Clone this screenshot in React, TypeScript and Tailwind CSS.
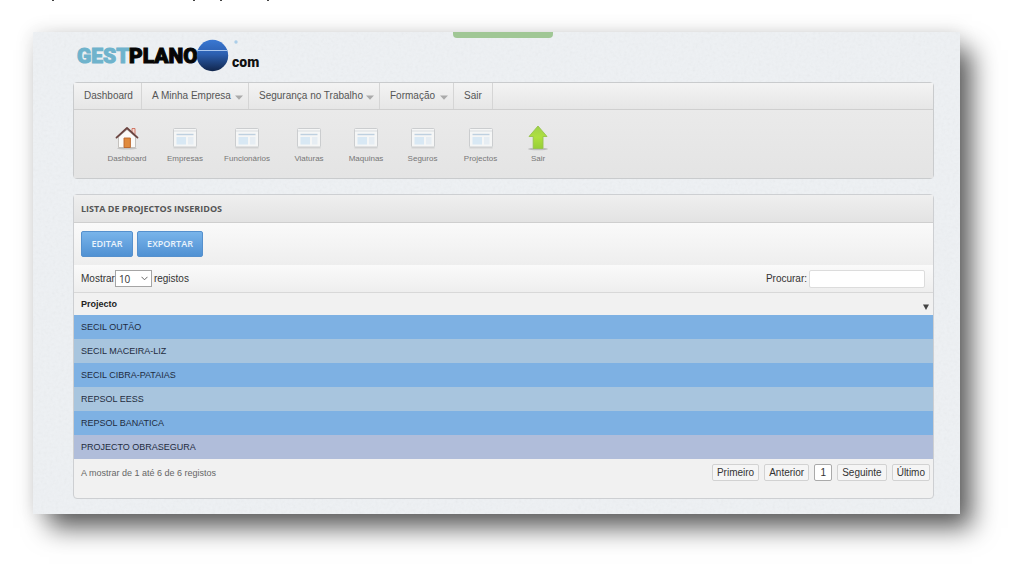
import React from "react";

const arial = "font-['Liberation_Sans',Arial,sans-serif]";

type MenuItem = { label: string; width: string; arrow?: boolean };

const menu: MenuItem[] = [
  { label: "Dashboard", width: "w-[68px]" },
  { label: "A Minha Empresa", width: "w-[107px]", arrow: true },
  { label: "Segurança no Trabalho", width: "w-[131px]", arrow: true },
  { label: "Formação", width: "w-[74px]", arrow: true },
  { label: "Sair", width: "w-[39px]" },
];

type Shortcut = { label: string; width: string; icon: () => React.ReactElement };

function HouseIcon() {
  return (
    <svg width="26" height="24" viewBox="0 0 26 24" aria-hidden="true">
      <ellipse cx="13" cy="22.3" rx="10" ry="1.2" fill="#000" opacity="0.15" />
      <path d="M18 2.5h3v6h-3z" fill="#f3d9d2" stroke="#c9614c" strokeWidth="0.8" />
      <path d="M4.500 11 13 3.600 21.500 11v10.500H4.500z" fill="#fbfaf8" stroke="#b9b5b0" strokeWidth="0.8" />
      <path d="M10 12h6.400v9.500H10z" fill="#e08a3c" stroke="#b9642a" strokeWidth="0.9" />
      <path d="M2.500 11.600 13 2l10.500 9.600" fill="none" stroke="#6b4440" strokeWidth="1.8" strokeLinejoin="round" strokeLinecap="round" />
    </svg>
  );
}

function WindowIcon() {
  return (
    <svg width="24" height="22" viewBox="0 0 24 22" aria-hidden="true">
      <rect x="0.5" y="20" width="23" height="1.5" fill="#000" opacity="0.08" />
      <rect x="0.5" y="1.5" width="23" height="18.5" rx="1" fill="#f5f6f6" stroke="#cbcdcf" />
      <path d="M1 4h22" stroke="#d9dde0" />
      <path d="M3.5 7.5h17" stroke="#bed0e0" strokeWidth="1.4" />
      <rect x="3.5" y="10" width="9.5" height="7.500" fill="#d8e8f4" />
      <rect x="15" y="10" width="5.5" height="7.500" fill="#e6edf3" />
    </svg>
  );
}

function UpIcon() {
  return (
    <svg width="24" height="26" viewBox="0 0 24 26" aria-hidden="true">
      <defs>
        <linearGradient id="up" x1="0" y1="0" x2="0" y2="1">
          <stop offset="0" stopColor="#9fd14a" />
          <stop offset="0.5" stopColor="#aee03f" />
          <stop offset="1" stopColor="#97cf38" />
        </linearGradient>
      </defs>
      <ellipse cx="12" cy="24" rx="10" ry="1.3" fill="#000" opacity="0.18" />
      <path d="M12 1 21 11.5h-4V23.500H7.200V11.500H3z" fill="url(#up)" stroke="#96c34c" strokeWidth="0.9" strokeLinejoin="round" />
    </svg>
  );
}

const shortcuts: Shortcut[] = [
  { label: "Dashboard", width: "w-[60px]", icon: HouseIcon },
  { label: "Empresas", width: "w-[56px]", icon: WindowIcon },
  { label: "Funcionários", width: "w-[68px]", icon: WindowIcon },
  { label: "Viaturas", width: "w-[56px]", icon: WindowIcon },
  { label: "Maquinas", width: "w-[58px]", icon: WindowIcon },
  { label: "Seguros", width: "w-[55px]", icon: WindowIcon },
  { label: "Projectos", width: "w-[61px]", icon: WindowIcon },
  { label: "Sair", width: "w-[54px]", icon: UpIcon },
];

const rows = [
  { name: "SECIL OUTÃO", bg: "bg-[#7eb1e3]" },
  { name: "SECIL MACEIRA-LIZ", bg: "bg-[#a8c5de]" },
  { name: "SECIL CIBRA-PATAIAS", bg: "bg-[#7eb1e3]" },
  { name: "REPSOL EESS", bg: "bg-[#a8c5de]" },
  { name: "REPSOL BANATICA", bg: "bg-[#7eb1e3]" },
  { name: "PROJECTO OBRASEGURA", bg: "bg-[#b0bdda]" },
];

const pages = ["Primeiro", "Anterior", "1", "Seguinte", "Último"];

function Texture() {
  return (
    <svg className="pointer-events-none absolute inset-0 h-full w-full opacity-8" aria-hidden="true">
      <filter id="grain">
        <feTurbulence type="fractalNoise" baseFrequency="0.35" numOctaves="2" seed="4" />
        <feColorMatrix type="saturate" values="0" />
      </filter>
      <rect width="100%" height="100%" filter="url(#grain)" />
    </svg>
  );
}

function Logo() {
  return (
    <a href="#" className="flex h-[36px] w-fit items-center pl-1 font-['Roboto',sans-serif] font-black whitespace-nowrap">
      <span className="w-[52px] text-[21px] leading-9 text-[#6fb3cc] [-webkit-text-stroke:1px_#6fb3cc]">GEST</span>
      <span className="w-[67px] text-[21px] leading-9 text-[#050505] [-webkit-text-stroke:1px_#050505]">PLANO</span>
      <svg width="42" height="34" viewBox="0 0 42 34" aria-hidden="true">
        <defs>
          <linearGradient id="globe" x1="0" y1="0" x2="0" y2="1">
            <stop offset="0" stopColor="#3a78d2" />
            <stop offset="0.45" stopColor="#2c5fb0" />
            <stop offset="1" stopColor="#11264c" />
          </linearGradient>
        </defs>
        <circle cx="16.500" cy="16.500" r="15.700" fill="url(#globe)" />
        <path d="M1.500 11.500h30" stroke="#a9c6ee" />
        <circle cx="40" cy="3" r="1.700" fill="#8fbfe4" opacity="0.7" />
      </svg>
      <span className="-ml-[6px] pt-3 text-[14px] leading-4 text-[#111]">com</span>
    </a>
  );
}

export default function App() {
  return (
    <div className={`min-h-screen overflow-hidden bg-white pr-[63px] pb-[63px] pl-[33px] text-[10px] leading-3 text-[#333] ${arial}`}>
      <svg className="block h-8 w-full" aria-hidden="true">
        <path d="M19 0h2M160 0h2M187 0h2M234 0h2" stroke="#444" strokeWidth="2" />
      </svg>
      <main className="relative bg-[#eef1f4] pt-[6px] pr-[26px] pb-[15px] pl-10 shadow-[14px_16px_24px_-2px_rgba(0,0,0,0.62),0_0_18px_rgba(0,0,0,0.12)]">
        <Texture />
        <div className="absolute top-0 left-[420px] h-[6px] w-[100px] rounded-b bg-[#a0c795]" />

        <div className="relative">
          <Logo />

          <header className="mt-2 rounded-sm border border-[#c9cbcd] bg-[#e8e8e8]">
            <nav className="flex h-[27px] border-b border-[#cfcfcf] bg-linear-to-b from-[#f3f3f3] to-[#e6e6e6]">
              {menu.map((m) => (
                <a key={m.label} href="#" className={`${m.width} flex shrink-0 items-center justify-between border-r border-[#d5d5d5] pr-[5px] pl-[10px] whitespace-nowrap text-[#555]`}>
                  {m.label}
                  {m.arrow && (
                    <svg width="8" height="5" viewBox="0 0 8 5" className="mt-[2px]" aria-hidden="true">
                      <path d="M0 0.500h8L4 4.800z" fill="#aaa" />
                    </svg>
                  )}
                </a>
              ))}
            </nav>
            <div className="flex bg-linear-to-b from-[#eaeaea] to-[#e4e4e4] pt-[14px] pb-[13px] pl-[23px]">
              {shortcuts.map((s) => (
                <a key={s.label} href="#" className={`${s.width} flex shrink-0 flex-col items-center text-[8px] leading-3 text-[#777]`}>
                  <span className="flex h-7 items-center">
                    <s.icon />
                  </span>
                  <span className="mt-px">{s.label}</span>
                </a>
              ))}
            </div>
          </header>

          <section className="mt-[15px] rounded-sm border border-[#cdcfd2] bg-[#f1f1f1]">
            <h1 className="flex h-7 items-center border-b border-[#cfcfcf] bg-linear-to-b from-[#efefef] to-[#e3e3e3] px-[7px] font-['Open_Sans',sans-serif] text-[9px] font-bold text-[#555]">
              LISTA DE PROJECTOS INSERIDOS
            </h1>
            <div className="flex gap-1 bg-linear-to-b from-[#fafafa] to-[#eeeeee] px-[7px] py-2 font-['Open_Sans',sans-serif] text-[9px] font-semibold text-[#eaf3fc]">
              <button type="button" className="h-[26px] w-[52px] rounded-xs border border-[#5590cd] bg-linear-to-b from-[#79b4ea] to-[#5091d3]">EDITAR</button>
              <button type="button" className="h-[26px] w-[66px] rounded-xs border border-[#5590cd] bg-linear-to-b from-[#79b4ea] to-[#5091d3]">EXPORTAR</button>
            </div>
            <div className="flex h-7 items-center justify-between border-b border-[#d8d8d8] bg-linear-to-b from-[#fafafa] to-[#eeeeee] pr-2 pl-[7px]">
              <label className="flex items-center">
                Mostrar
                <span className="relative flex pr-[2px]">
                  <select className="h-[17px] w-[37px] appearance-none border border-[#a5a5a5] bg-white pl-[3px] font-['Open_Sans',sans-serif] text-[10px] leading-3">
                    <option>10</option>
                    <option>25</option>
                    <option>50</option>
                  </select>
                  <svg width="7" height="5" viewBox="0 0 7 5" className="pointer-events-none absolute top-[6px] right-[6px]" aria-hidden="true">
                    <path d="M0.500 0.800 3.500 3.800 6.500 0.800" fill="none" stroke="#666" />
                  </svg>
                </span>
                registos
              </label>
              <label className="flex items-center gap-[2px]">
                Procurar:
                <input type="text" className="h-[18px] w-[116px] rounded-xs border border-[#dcdcdc] bg-white px-1" />
              </label>
            </div>
            <table className="w-full border-collapse text-left text-[9px]">
              <thead>
                <tr className="h-[22px] bg-[#f1f1f1]">
                  <th className="px-[7px] font-bold text-[#222]">
                    <span className="flex justify-between">
                      Projecto
                      <svg width="6" height="6" viewBox="0 0 6 6" className="-mr-[3px] mt-[6px]" aria-hidden="true">
                        <path d="M0 0.500h6L3 6z" fill="#444" />
                      </svg>
                    </span>
                  </th>
                </tr>
              </thead>
              <tbody>
                {rows.map((r) => (
                  <tr key={r.name} className={`${r.bg} h-6 text-[#1f2c40]`}>
                    <td className="px-[7px]">{r.name}</td>
                  </tr>
                ))}
              </tbody>
            </table>
            <div className="flex items-center justify-between pt-[5px] pr-[3px] pb-[17px] pl-[7px]">
              <p className="text-[9px] text-[#666]">A mostrar de 1 até 6 de 6 registos</p>
              <div className="flex gap-[5px]">
                {pages.map((p) => (
                  <button key={p} type="button" className={`h-[17px] min-w-[18px] rounded-xs border px-1 ${p === "1" ? "border-[#aaa] bg-white" : "border-[#d2d2d2] bg-[#f5f5f5]"}`}>
                    {p}
                  </button>
                ))}
              </div>
            </div>
          </section>
        </div>
      </main>
    </div>
  );
}
